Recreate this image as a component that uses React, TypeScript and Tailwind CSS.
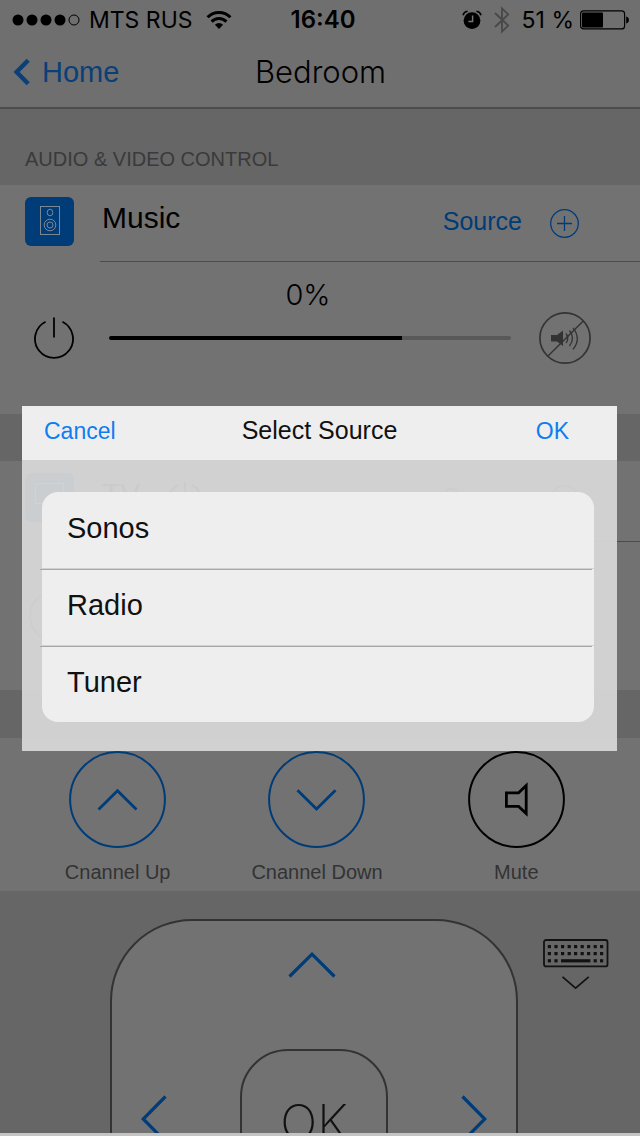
import React, { useState } from "react";

const SANS = "font-['Liberation_Sans',sans-serif]";

function SignalDots() {
  return (
    <svg width="68" height="12" viewBox="0 0 68 12" aria-hidden="true">
      {[6, 20, 34, 48].map((x) => (
        <circle key={x} cx={x} cy="6" r="5.5" fill="#000" />
      ))}
      <circle cx="62" cy="6" r="5" fill="none" stroke="#000" strokeWidth="1" />
    </svg>
  );
}

function WifiIcon() {
  return (
    <svg width="26" height="20" viewBox="0 0 26 20" fill="none" stroke="#000" strokeWidth="3" aria-hidden="true">
      <path d="M1.6 7.2a16.2 16.2 0 0 1 22.8 0" />
      <path d="M5.6 11.6a10.4 10.4 0 0 1 14.8 0" />
      <path d="M13 18.9 8.9 14.7a5.8 5.8 0 0 1 8.2 0z" fill="#000" stroke="none" />
    </svg>
  );
}

function AlarmIcon() {
  return (
    <svg width="20" height="20" viewBox="0 0 20 20" aria-hidden="true">
      <circle cx="10" cy="10.6" r="8.4" fill="#000" />
      <path d="M1 5.2C1.6 3 3.2 1.6 5.6 1.3M19 5.2C18.4 3 16.8 1.6 14.4 1.3" fill="none" stroke="#000" strokeWidth="1.5" />
      <path d="M10.6 5.5v6H6.4" fill="none" stroke="#777" strokeWidth="1.5" />
    </svg>
  );
}

function BluetoothIcon() {
  return (
    <svg width="16" height="28" viewBox="0 0 16 28" fill="none" stroke="#494949" strokeWidth="1.9" aria-hidden="true">
      <path d="M1 7l13.2 12.6L8 25.6V2.4l6.2 6L1 21" />
    </svg>
  );
}

function BatteryIcon() {
  return (
    <svg width="50" height="20" viewBox="0 0 50 20" aria-hidden="true">
      <rect x="0.6" y="0.9" width="44" height="18" rx="3" fill="none" stroke="#000" strokeWidth="1.2" />
      <rect x="2" y="2.4" width="21" height="15" rx="1" fill="#000" />
      <path d="M46.2 6.5c3.6.6 3.6 6.4 0 7z" fill="#000" />
    </svg>
  );
}

function SpeakerTile() {
  return (
    <svg width="49" height="49" viewBox="0 0 49 49" fill="none" aria-hidden="true">
      <rect width="49" height="49" rx="6" fill="#003c78" />
      <g stroke="#7b8793" strokeWidth="1">
        <rect x="15.5" y="9.5" width="19" height="28" />
        <ellipse cx="25" cy="15.5" rx="2.8" ry="3.3" />
        <circle cx="25" cy="28" r="5.8" />
        <circle cx="25" cy="28" r="3" />
      </g>
    </svg>
  );
}

function ScreenTile() {
  return (
    <svg width="49" height="49" viewBox="0 0 49 49" fill="none" aria-hidden="true">
      <rect width="49" height="49" rx="6" fill="#003c78" />
      <rect x="10.5" y="10.5" width="28" height="20" stroke="#7b8793" />
    </svg>
  );
}

function PowerIcon({ size }: { size: number }) {
  return (
    <svg width={size} height={size + 2} viewBox="0 0 40 42" fill="none" stroke="#000" strokeWidth="1.8" aria-hidden="true">
      <path d="M11.6 4.8a19 19 0 1 0 16.8 0" />
      <path d="M20 0.5v20" />
    </svg>
  );
}

function PlusCircle() {
  return (
    <svg width="30" height="30" viewBox="0 0 30 30" fill="none" stroke="#003c78" strokeWidth="1.3" aria-hidden="true">
      <circle cx="14.5" cy="14.5" r="13.8" />
      <path d="M14.5 7v15M7 14.5h15" />
    </svg>
  );
}

function MutedIcon() {
  return (
    <svg width="52" height="52" viewBox="0 0 52 52" fill="none" stroke="#333" strokeWidth="1.7" aria-hidden="true">
      <circle cx="26" cy="26" r="25.1" />
      <path d="M8.5 44.5 44 9.2" strokeWidth="1.4" />
      <path d="M12 23h6l6-4.5v15.5L18 29.5h-6z" fill="#333" stroke="none" />
      <path d="M27 21.5q3.6 5 0 9.5M30.5 18.5q6 8 0 15.5M34 15.8q8.6 11 0 21.6" strokeWidth="1.3" />
    </svg>
  );
}

function KeyboardIcon() {
  const cols = [6.2, 12.8, 19.4, 26, 32.4, 39, 45.4, 52, 58.4];
  return (
    <svg width="66" height="52" viewBox="0 0 66 52" fill="none" aria-hidden="true">
      <rect x="1" y="1" width="63.5" height="26.4" rx="2" stroke="#121212" strokeWidth="1.8" />
      <g fill="#121212">
        {cols.map((x) => (
          <React.Fragment key={x}>
            <rect x={x - 1.4} y="6" width="3.2" height="3.2" />
            <rect x={x - 1.4} y="13" width="3.2" height="3.2" />
          </React.Fragment>
        ))}
        {[cols[0], cols[1], cols[7], cols[8]].map((x) => (
          <rect key={x} x={x - 1.4} y="20.2" width="3.2" height="3.2" />
        ))}
        <rect x="18" y="20.2" width="29.4" height="3.2" />
      </g>
      <path d="M19.5 37.8 32.6 49.2 45.7 37.8" stroke="#121212" strokeWidth="1.7" />
    </svg>
  );
}

function Chevron({ d, w, h }: { d: string; w: number; h: number }) {
  return (
    <svg width={w} height={h} viewBox={`0 0 ${w} ${h}`} fill="none" stroke="#003c78" strokeWidth="3.2" aria-hidden="true">
      <path d={d} />
    </svg>
  );
}

function RoundIcon({ color, children }: { color: string; children: React.ReactNode }) {
  return (
    <svg width="97" height="97" viewBox="0 0 97 97" fill="none" stroke={color} aria-hidden="true">
      <circle cx="48.5" cy="48.5" r="47.4" strokeWidth="2" />
      {children}
    </svg>
  );
}

function DeviceHeader({ tile, name, extra }: { tile: React.ReactNode; name: string; extra?: React.ReactNode }) {
  return (
    <div className="flex h-[76px] items-start pl-[25px] pr-[60px] pt-3">
      {tile}
      <h3 className="ml-7 text-[30px] leading-[42px] text-black">{name}</h3>
      {extra}
      <button type="button" className="ml-auto text-[25px] leading-[48px] text-[#003c78]">
        Source
      </button>
      <button type="button" aria-label={`Add ${name} source`} className="ml-7 mt-3">
        <PlusCircle />
      </button>
    </div>
  );
}

const SOURCES = ["Sonos", "Radio", "Tuner"];

export default function App() {
  const [volume, setVolume] = useState(73);
  return (
    <div className={`relative flex h-screen flex-col overflow-hidden bg-[#666] ${SANS}`}>
      <header className="shrink-0 border-b-2 border-[#4c4c4c] bg-[#6f6f6f] text-black">
        <div className="grid h-10 grid-cols-[1fr_auto_1fr] items-center pl-3 pr-[10px] font-['Inter',sans-serif] text-[23px] leading-10">
          <div className="flex items-center">
            <SignalDots />
            <span className="ml-[9px]">MTS RUS</span>
            <span className="ml-[13px]">
              <WifiIcon />
            </span>
          </div>
          <span className="pl-1 text-[24px] font-semibold">16:40</span>
          <div className="flex items-center justify-end">
            <AlarmIcon />
            <span className="ml-3">
              <BluetoothIcon />
            </span>
            <span className="ml-3 mr-[6px]">51 %</span>
            <BatteryIcon />
          </div>
        </div>
        <div className="grid h-[67px] grid-cols-[1fr_auto_1fr] items-center pb-1 pl-[13px] pr-3">
          <a href="#home" className="flex items-center gap-3 text-[29px] leading-[60px] text-[#0a3f78]">
            <svg width="17" height="28" viewBox="0 0 17 28" fill="none" stroke="#0a3f78" strokeWidth="4.4" aria-hidden="true">
              <path d="M15.2 2.2 3.6 14l11.6 11.8" />
            </svg>
            Home
          </a>
          <h1 className="font-['Inter',sans-serif] text-[31px] font-light leading-[60px]">Bedroom</h1>
          <span />
        </div>
      </header>

      <main className="min-h-0 flex-1 overflow-hidden">
        <h2 className="h-[76px] px-[25px] pt-[38px] text-[20px] leading-6 text-[#3a3a3a]">AUDIO &amp; VIDEO CONTROL</h2>

        <section className="bg-[#727272]">
          <DeviceHeader tile={<SpeakerTile />} name="Music" />
          <div className="ml-[100px] h-px bg-[#4c4c4c]" />
          <div className="h-[152px] pt-[15px]">
            <p className="pr-6 text-center font-['Inter',sans-serif] text-[29px] font-light leading-[35px]">0%</p>
            <div className="flex items-center pl-[34px] pr-[49px]">
              <button type="button" aria-label="Power">
                <PowerIcon size={40} />
              </button>
              <input
                type="range"
                aria-label="Volume"
                min={0}
                max={100}
                value={volume}
                onChange={(e) => setVolume(Number(e.target.value))}
                style={{ backgroundImage: `linear-gradient(to right, #000 ${volume}%, #595959 ${volume}%)` }}
                className="ml-[35px] mr-7 h-1 min-w-0 flex-1 appearance-none rounded-full [&::-webkit-slider-thumb]:h-0 [&::-webkit-slider-thumb]:w-0 [&::-webkit-slider-thumb]:appearance-none"
              />
              <button type="button" aria-label="Mute music">
                <MutedIcon />
              </button>
            </div>
          </div>
        </section>

        <section className="mt-[47px] h-[229px] bg-[#727272]">
          <DeviceHeader
            tile={<ScreenTile />}
            name="TV"
            extra={
              <span className="ml-7 mt-2">
                <PowerIcon size={34} />
              </span>
            }
          />
          <div className="ml-[100px] mt-1 h-px bg-[#4c4c4c]" />
          <svg width="52" height="52" viewBox="0 0 52 52" className="ml-[29px] mt-12" aria-hidden="true">
            <circle cx="26" cy="26" r="25" fill="none" stroke="#333" strokeWidth="1.5" />
          </svg>
        </section>

        <section className="mt-12 grid grid-cols-3 bg-[#727272] pb-[7px] pl-[18px] pr-6 pt-[13px] text-[20px] leading-6 text-[#333]">
          <button type="button" className="flex flex-col items-center gap-3">
            <RoundIcon color="#003c78">
              <path d="M29.5 58.5 48.5 39.8 67.5 58.5" strokeWidth="2.8" />
            </RoundIcon>
            Cnannel Up
          </button>
          <button type="button" className="flex flex-col items-center gap-3">
            <RoundIcon color="#003c78">
              <path d="M29.5 39.2 48.5 58 67.5 39.2" strokeWidth="2.8" />
            </RoundIcon>
            Cnannel Down
          </button>
          <button type="button" className="flex flex-col items-center gap-3">
            <RoundIcon color="#000">
              <path d="M38.4 41.8h12.2l7.6-7.2v28l-7.6-7.2H38.4z" strokeWidth="2.8" />
            </RoundIcon>
            Mute
          </button>
        </section>

        <div className="flex items-start gap-[25px] pl-[110px] pr-[31px] pt-7">
          <div className="grid h-[408px] flex-1 grid-cols-[56px_1fr_56px] grid-rows-[56px_1fr_56px] items-center justify-items-center rounded-[82px] border-2 border-[#333] bg-[#727272] px-[14px] py-4">
            <button type="button" aria-label="Up" className="col-start-2 pr-1">
              <Chevron w={48} h={26} d="M1.5 24.5 24 2.2 46.5 24.5" />
            </button>
            <button type="button" aria-label="Left" className="col-start-1 row-start-2 pb-2">
              <Chevron w={26} h={48} d="M24.5 1.5 2.2 24 24.5 46.5" />
            </button>
            <button
              type="button"
              className="col-start-2 row-start-2 size-[148px] rounded-[48px] border-2 border-[#333] font-['Inter',sans-serif] text-[49px] font-extralight text-[#111]"
            >
              OK
            </button>
            <button type="button" aria-label="Right" className="col-start-3 row-start-2 pb-2">
              <Chevron w={26} h={48} d="M1.5 1.5 23.8 24 1.5 46.5" />
            </button>
            <button type="button" aria-label="Down" className="col-start-2 row-start-3">
              <Chevron w={48} h={26} d="M1.5 1.5 24 23.8 46.5 1.5" />
            </button>
          </div>
          <button type="button" aria-label="Show keyboard" className="mt-5">
            <KeyboardIcon />
          </button>
        </div>
      </main>
      <div className="h-[3px] shrink-0 bg-[#c4c4c4]" />

      <div className="absolute inset-0 flex flex-col justify-center pl-[22px] pr-[23px] pt-[21px]">
        <div role="dialog" aria-modal="true" aria-labelledby="dialog-title">
          <div className="grid h-[54px] grid-cols-[1fr_auto_1fr] items-center bg-[#eee] px-[22px] pb-1 text-[23px] text-[#0f7df2]">
            <button type="button" className="justify-self-start">
              Cancel
            </button>
            <h2 id="dialog-title" className="text-[25px] text-[#111]">
              Select Source
            </h2>
            <button type="button" className="justify-self-end pr-[26px]">
              OK
            </button>
          </div>
          <div className="bg-[#d6d6d6]/95 pb-[29px] pl-5 pr-[23px] pt-8">
            <ul className="flex flex-col gap-px">
              {SOURCES.map((name, i) => (
                <li
                  key={name}
                  className="h-[76px] bg-[#eee] first:rounded-t-2xl last:rounded-b-2xl"
                >
                  {i > 0 && <div className="-ml-[2px] mr-[2px] -mb-px h-px bg-[#a8a8a8]" />}
                  <button type="button" className="w-full pl-[25px] text-left text-[29px] leading-[72px] text-[#111]">
                    {name}
                  </button>
                </li>
              ))}
            </ul>
          </div>
        </div>
      </div>
    </div>
  );
}
